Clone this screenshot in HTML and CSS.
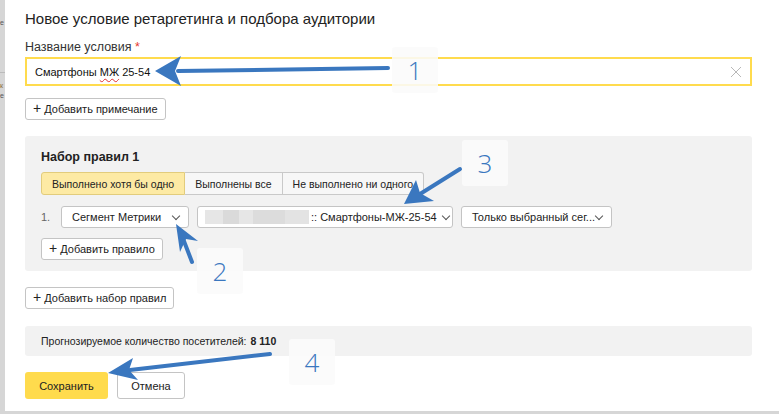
FILE: index.html
```html
<!DOCTYPE html>
<html lang="ru">
<head>
    <meta charset="UTF-8">
    <title>Новое условие ретаргетинга</title>
    <link rel="stylesheet" href="styles.css">
</head>
<body>
    <div class="screen">
        <div class="side">
            <span class="side-a">е</span>
            <span class="side-line"></span>
            <span class="side-b">к</span>
            <span class="side-c">е</span>
        </div>
        <div class="modal">
            <h1 class="title">Новое условие ретаргетинга и подбора аудитории</h1>
            <div class="label">Название условия <span class="req">*</span></div>
            <div class="input">
                <span>Смартфоны <span class="typo">МЖ</span> 25-54</span>
                <svg class="clear" width="12" height="12" viewBox="0 0 12 12"><path d="M1 1L11 11M11 1L1 11" stroke="#b8b8b8" stroke-width="1"/></svg>
            </div>
            <div class="row"><button class="btn"><span class="plus">+</span> Добавить примечание</button></div>

            <div class="ruleset">
                <div class="ruleset-title">Набор правил 1</div>
                <div class="tabs">
                    <span class="tab active">Выполнено хотя бы одно</span>
                    <span class="tab">Выполнены все</span>
                    <span class="tab">Не выполнено ни одного</span>
                </div>
                <div class="rule">
                    <span class="num">1.</span>
                    <span class="select sel-type">Сегмент Метрики <i class="chev"></i></span>
                    <span class="select sel-seg">
                        <span class="blur">
                            <b style="width:18px"></b><b style="width:16px;background:#dadada"></b><b style="width:14px"></b><b style="width:32px;background:#dcdcdc"></b><b style="width:24px;background:#e3e3e3"></b>
                        </span>
                        <span class="seg-name">:: Смартфоны-МЖ-25-54</span>
                        <i class="chev"></i>
                    </span>
                    <span class="select sel-scope">Только выбранный сег... <i class="chev"></i></span>
                </div>
                <div class="row row-tight"><button class="btn"><span class="plus">+</span> Добавить правило</button></div>
            </div>

            <div class="row row-wide"><button class="btn"><span class="plus">+</span> Добавить набор правил</button></div>

            <div class="forecast">Прогнозируемое количество посетителей: <b>8 110</b></div>

            <div class="actions">
                <button class="btn-save">Сохранить</button>
                <button class="btn-cancel">Отмена</button>
            </div>
        </div>

        <!-- annotations on top of the screenshot -->
        <div class="mark mark-1">1</div>
        <div class="mark mark-2">2</div>
        <div class="mark mark-3">3</div>
        <div class="mark mark-4">4</div>
        <svg class="arrows" width="779" height="414" viewBox="0 0 779 414">
            <g fill="#3a77bf" stroke="#3a77bf" stroke-linecap="round">
                <path d="M388 68 L178 71" stroke-width="4" fill="none"/>
                <path d="M155 71 L181 56 L175 71 L181 86 Z" stroke="none"/>
                <path d="M192 262 L182 236" stroke-width="4" fill="none"/>
                <path d="M176 224 L198 241 L186 239 L180 252 Z" stroke="none"/>
                <path d="M460 169 L420 194" stroke-width="4" fill="none"/>
                <path d="M404 204 L416 180 L420 193 L434 201 Z" stroke="none"/>
                <path d="M270 354 L130 370" stroke-width="4" fill="none"/>
                <path d="M108 373 L133 358 L129 370 L138 380 Z" stroke="none"/>
            </g>
        </svg>
    </div>
</body>
</html>
```

FILE: styles.css
```css
body {
    margin: 0;
    background: #d6d6d6;
    font-family: "Liberation Sans", Arial, sans-serif;
    color: #222;
}
.screen {
    position: relative;
    width: 779px;
    height: 414px;
    display: flex;
    overflow: hidden;
}
.side {
    position: relative;
    width: 5px;
    flex: none;
    overflow: hidden;
    font-size: 7px;
    line-height: 8px;
    color: #555;
}
.side-a { position: absolute; top: 19px; left: 0; }
.side-line { position: absolute; top: 72px; left: 0; width: 5px; border-top: 1px solid #bbb; }
.side-b { position: absolute; top: 82px; left: 0; color: #8a6d3b; }
.side-c { position: absolute; top: 92px; left: 0; }

.modal {
    flex: 1;
    height: 411px;
    background: #fff;
    padding: 9px 27px 0 20px;
    box-sizing: border-box;
    display: flex;
    flex-direction: column;
}
.title {
    margin: 0;
    font-size: 15px;
    font-weight: normal;
    line-height: 20px;
    color: #222;
}
.label {
    margin-top: 9px;
    font-size: 12.5px;
    line-height: 18px;
    color: #333;
}
.req {
    color: #e63a2e;
}
.input {
    margin-top: 1px;
    height: 29px;
    border: 2px solid #ffdb4d;
    box-sizing: border-box;
    display: flex;
    align-items: center;
    justify-content: space-between;
    padding: 0 8px 0 8px;
    font-size: 11px;
    color: #111;
}
.typo {
    text-decoration: underline wavy #e03030;
    text-decoration-thickness: 1px;
    text-underline-offset: 2px;
}
.row {
    display: flex;
    margin-top: 12px;
}
.row-tight {
    margin-top: 10px;
}
.row-wide {
    margin-top: 16px;
}
.btn {
    height: 22px;
    padding: 0 7px;
    border: 1px solid #c4c4c4;
    border-radius: 3px;
    background: #fff;
    font-family: inherit;
    font-size: 11px;
    color: #222;
}
.plus {
    font-size: 14px;
    line-height: 10px;
}

.ruleset {
    margin-top: 16px;
    background: #f2f2f2;
    border-radius: 3px;
    padding: 13px 16px 11px 16px;
}
.ruleset-title {
    font-size: 12.5px;
    font-weight: bold;
    line-height: 16px;
}
.tabs {
    display: flex;
    margin-top: 7px;
}
.tab {
    height: 21px;
    padding: 0 10px;
    display: flex;
    align-items: center;
    border: 1px solid #c9c9c9;
    border-left: none;
    background: #f7f7f7;
    font-size: 10.5px;
    color: #222;
}
.tab:first-child {
    border-left: 1px solid #d9c47a;
    border-radius: 3px 0 0 3px;
}
.tab:last-child {
    border-radius: 0 3px 3px 0;
}
.tab.active {
    background: #fdeaa4;
    border-color: #e2cc7c;
}
.rule {
    display: flex;
    align-items: center;
    margin-top: 11px;
}
.num {
    width: 20px;
    font-size: 11px;
    color: #666;
}
.select {
    height: 22px;
    box-sizing: border-box;
    border: 1px solid #c4c4c4;
    border-radius: 3px;
    background: #fff;
    display: flex;
    align-items: center;
    padding: 0 7px 0 10px;
    font-size: 11px;
    color: #222;
    margin-right: 8px;
    white-space: nowrap;
}
.chev {
    flex: none;
    width: 5px;
    height: 5px;
    border-right: 1px solid #555;
    border-bottom: 1px solid #555;
    transform: rotate(45deg);
    margin: -3px 2px 0 auto;
}
.sel-type { width: 128px; }
.sel-seg { width: 256px; padding-left: 7px; }
.sel-scope { width: 151px; }
.blur {
    display: flex;
    flex: none;
    height: 14px;
    margin-right: 2px;
}
.blur b {
    display: block;
    height: 14px;
    background: #e6e6e6;
}
.seg-name {
    margin-right: 6px;
}

.forecast {
    margin-top: 17px;
    height: 30px;
    background: #f2f2f2;
    border-radius: 3px;
    display: flex;
    align-items: center;
    padding-left: 16px;
    font-size: 10.5px;
    color: #222;
}
.forecast b {
    margin-left: 4px;
}
.actions {
    display: flex;
    margin-top: 16px;
}
.btn-save {
    width: 83px;
    height: 27px;
    border: none;
    border-radius: 3px;
    background: #ffdb4d;
    font-family: inherit;
    font-size: 11px;
    color: #222;
}
.btn-cancel {
    margin-left: 9px;
    width: 68px;
    height: 27px;
    border: 1px solid #c4c4c4;
    border-radius: 3px;
    background: #fff;
    font-family: inherit;
    font-size: 11px;
    color: #222;
}

.mark {
    position: absolute;
    width: 46px;
    height: 46px;
    background: rgba(250, 250, 250, 0.88);
    border-radius: 3px;
    color: #3a77bf;
    font-size: 26px;
    font-weight: 300;
    text-align: center;
    line-height: 46px;
    font-family: "Open Sans", sans-serif;
}
.mark-1 { left: 392px; top: 47px; }
.mark-2 { left: 197px; top: 248px; }
.mark-3 { left: 462px; top: 140px; }
.mark-4 { left: 289px; top: 339px; }
.arrows {
    position: absolute;
    left: 0;
    top: 0;
}
```
